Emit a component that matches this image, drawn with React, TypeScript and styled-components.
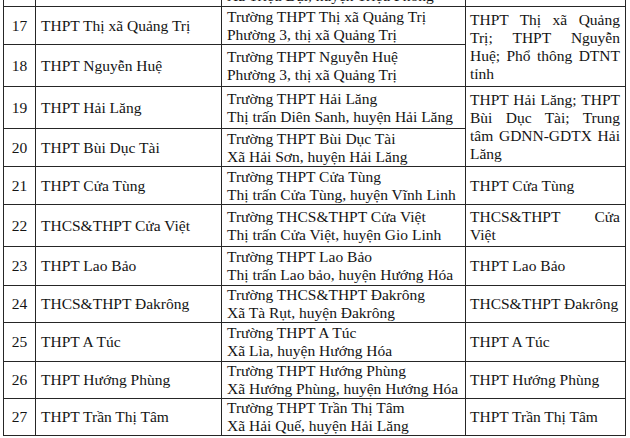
import React from "react";
import styled, { createGlobalStyle } from "styled-components";

type SchoolRow = {
  no: string;
  name: string;
  address: string[];
  unit?: string[];
  span?: number;
  height: number;
};

// unit lines follow the wrapping of the printed document
const rows: SchoolRow[] = [
  { no: "", name: "", address: ["Trường THPT Vĩnh Định", "Xã Triệu Đại, huyện Triệu Phong"], unit: [], height: 40 },
  {
    no: "17",
    name: "THPT Thị xã Quảng Trị",
    address: ["Trường THPT Thị xã Quảng Trị", "Phường 3, thị xã Quảng Trị"],
    unit: ["THPT Thị xã Quảng", "Trị; THPT Nguyễn", "Huệ; Phổ thông DTNT", "tỉnh"],
    span: 2,
    height: 38,
  },
  { no: "18", name: "THPT Nguyễn Huệ", address: ["Trường THPT Nguyễn Huệ", "Phường 3, thị xã Quảng Trị"], height: 42 },
  {
    no: "19",
    name: "THPT Hải Lăng",
    address: ["Trường THPT Hải Lăng", "Thị trấn Diên Sanh, huyện Hải Lăng"],
    unit: ["THPT Hải Lăng; THPT", "Bùi Dục Tài; Trung", "tâm GDNN-GDTX Hải", "Lăng"],
    span: 2,
    height: 42,
  },
  { no: "20", name: "THPT Bùi Dục Tài", address: ["Trường THPT Bùi Dục Tài", "Xã Hải Sơn, huyện Hải Lăng"], height: 38 },
  {
    no: "21",
    name: "THPT Cửa Tùng",
    address: ["Trường THPT Cửa Tùng", "Thị trấn Cửa Tùng, huyện Vĩnh Linh"],
    unit: ["THPT Cửa Tùng"],
    height: 38,
  },
  {
    no: "22",
    name: "THCS&THPT Cửa Việt",
    address: ["Trường THCS&THPT Cửa Việt", "Thị trấn Cửa Việt, huyện Gio Linh"],
    unit: ["THCS&THPT Cửa", "Việt"],
    height: 42,
  },
  {
    no: "23",
    name: "THPT Lao Bảo",
    address: ["Trường THPT Lao Bảo", "Thị trấn Lao bảo, huyện Hướng Hóa"],
    unit: ["THPT Lao Bảo"],
    height: 39,
  },
  {
    no: "24",
    name: "THCS&THPT Đakrông",
    address: ["Trường THCS&THPT Đakrông", "Xã Tà Rụt, huyện Đakrông"],
    unit: ["THCS&THPT Đakrông"],
    height: 37,
  },
  { no: "25", name: "THPT A Túc", address: ["Trường THPT A Túc", "Xã Lìa, huyện Hướng Hóa"], unit: ["THPT A Túc"], height: 39 },
  {
    no: "26",
    name: "THPT Hướng Phùng",
    address: ["Trường THPT Hướng Phùng", "Xã Hướng Phùng, huyện Hướng Hóa"],
    unit: ["THPT Hướng Phùng"],
    height: 37,
  },
  {
    no: "27",
    name: "THPT Trần Thị Tâm",
    address: ["Trường THPT Trần Thị Tâm", "Xã Hải Quế, huyện Hải Lăng"],
    unit: ["THPT Trần Thị Tâm"],
    height: 37,
  },
];

const GlobalStyle = createGlobalStyle`
  html, body {
    margin: 0;
    padding: 0;
    background: #ffffff;
  }
  body {
    font-family: "Liberation Serif", "Times New Roman", serif;
    color: #141414;
  }
`;

const Page = styled.div`
  width: 630px;
  height: 438px;
  overflow: hidden;
  padding-left: 3px;
  box-sizing: border-box;
`;

const Table = styled.table`
  border-collapse: collapse;
  table-layout: fixed;
  width: 622px;
  margin-top: -34px;
  font-size: 15.5px;
  line-height: 18px;
`;

const Row = styled.tr<{ $h: number }>`
  height: ${(p) => p.$h}px;
`;

const Cell = styled.td`
  border: 1px solid #262626;
  padding: 0 5px;
  vertical-align: middle;
  box-sizing: border-box;
`;

const NoCell = styled(Cell)`
  text-align: center;
  padding: 0 2px;
`;

const AddressCell = styled(Cell)`
  white-space: nowrap;
  overflow: hidden;
  padding: 0 2px 0 5px;
`;

const UnitCell = styled(Cell)`
  padding: 0 5px 0 4px;
`;

const Line = styled.div`
  display: block;
`;

const UnitLine = styled.div<{ $justify: boolean }>`
  text-align: ${(p) => (p.$justify ? "justify" : "left")};
  text-align-last: ${(p) => (p.$justify ? "justify" : "left")};
`;

export default function App() {
  return (
    <>
      <GlobalStyle />
      <Page>
        <Table>
          <colgroup>
            <col style={{ width: 32 }} />
            <col style={{ width: 186 }} />
            <col style={{ width: 244 }} />
            <col style={{ width: 160 }} />
          </colgroup>
          <tbody>
            {rows.map((r, i) => (
              <Row key={i} $h={r.height}>
                <NoCell>{r.no}</NoCell>
                <Cell>{r.name}</Cell>
                <AddressCell>
                  {r.address.map((line) => (
                    <Line key={line}>{line}</Line>
                  ))}
                </AddressCell>
                {r.unit && (
                  <UnitCell rowSpan={r.span ?? 1}>
                    {r.unit.map((line, j) => (
                      <UnitLine key={j} $justify={j < r.unit!.length - 1}>
                        {line}
                      </UnitLine>
                    ))}
                  </UnitCell>
                )}
              </Row>
            ))}
          </tbody>
        </Table>
      </Page>
    </>
  );
}
